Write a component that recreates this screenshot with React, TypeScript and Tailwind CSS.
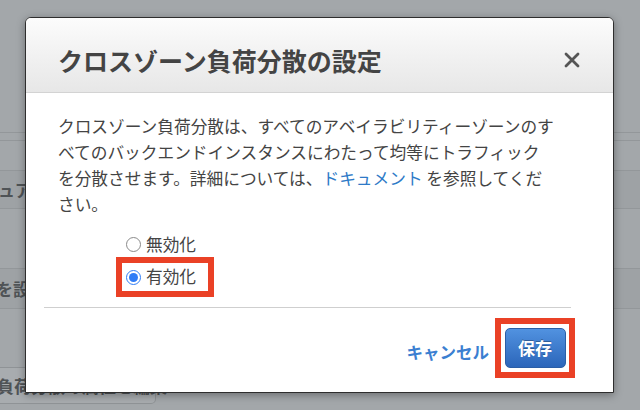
import React from "react";

function Radio({ checked }: { checked: boolean }) {
  if (checked) {
    return (
      <span className="flex h-[15px] w-[15px] items-center justify-center rounded-full border-[1.5px] border-[#2f7cf6] bg-white">
        <span className="h-[9px] w-[9px] rounded-full bg-[#2f7cf6]" />
      </span>
    );
  }
  return <span className="h-[15px] w-[15px] rounded-full border border-[#8a8a8a] bg-white" />;
}

function BackgroundPage() {
  return (
    <div className="flex flex-col text-[17px] font-bold text-[#4f5356]">
      <div className="h-[132px]" />
      <div className="h-[8px] border-t border-[#93979a]" />
      <div className="h-[30px] border-t border-[#93979a]" />
      <div className="flex h-[38px] items-center border-t border-[#93979a] bg-[#9ea2a5] pl-[0px]">
        <span className="-ml-[2px]">ュア</span>
      </div>
      <div className="h-[60px] border-t border-[#93979a]" />
      <div className="flex h-[40px] items-center border-t border-[#93979a] bg-[#9ea2a5]">
        <span className="-ml-[4px]">を設定</span>
      </div>
      <div className="h-[59px] border-t border-[#93979a]" />
      <div className="flex h-[37px] w-[156px] items-center rounded-br-[5px] border border-l-0 border-[#8f9396] bg-[#a8acaf]">
        <span className="-ml-[3px] whitespace-nowrap">負荷分散の属性を編集</span>
      </div>
    </div>
  );
}

function Modal() {
  return (
    <div className="absolute left-[25px] top-[17px] flex h-[376px] w-[589px] flex-col rounded-t-[6px] border-[1.5px] border-[#2e2e2e] bg-white shadow-[0_2px_8px_rgba(0,0,0,0.35)]">
      <div className="flex h-[75px] items-start justify-between rounded-t-[5px] border-b border-[#d3d3d3] bg-gradient-to-b from-[#fcfcfc] to-[#e7e7e7] pl-[32px] pr-[33px] pt-[26px]">
        <h2 className="text-[25px] font-bold leading-[32px] text-[#444]">
          クロスゾーン負荷分散の設定
        </h2>
        <svg className="mt-[8px] h-[16px] w-[16px]" viewBox="0 0 16 16" aria-hidden="true">
          <path d="M2 2L14 14M14 2L2 14" stroke="#555" strokeWidth="2.8" strokeLinecap="round" />
        </svg>
      </div>

      <div className="pl-[32px] pt-[20px]">
        <p className="text-[16.7px] leading-[26px] text-[#444]">
          クロスゾーン負荷分散は、すべてのアベイラビリティーゾーンのす
          <br />
          べてのバックエンドインスタンスにわたって均等にトラフィック
          <br />
          を分散させます。詳細については、
          <span className="text-[#2e7ac7]">ドキュメント</span> を参照してくだ
          <br />
          さい。
        </p>
      </div>

      <div className="mt-[15px] flex flex-col items-start pl-[90px] text-[16.7px] text-[#444]">
        <label className="flex h-[25px] items-center gap-[5px] pl-[10px]">
          <Radio checked={false} />
          <span>無効化</span>
        </label>
        <div className="flex h-[40px] w-[98px] items-center gap-[5px] border-[6px] border-[#ea4126] pl-[4px]">
          <Radio checked />
          <span>有効化</span>
        </div>
      </div>

      <div className="ml-[18px] mr-[42px] mt-[10px] border-t border-[#cfcfcf]" />

      <div className="flex items-center justify-end gap-[6px] pr-[38px] pt-[10px]">
        <button className="mt-[8px] text-[16.5px] font-bold text-[#3b7fd1]">キャンセル</button>
        <div className="flex h-[60px] w-[80px] items-center justify-center border-[6px] border-[#ea4126]">
          <button className="flex h-[40px] w-[61px] items-center justify-center rounded-[5px] border border-[#2b5ea6] bg-gradient-to-b from-[#5192e0] to-[#2c66ba] text-[17px] font-bold text-white [text-shadow:0_-1px_0_rgba(0,0,0,0.3)]">
            保存
          </button>
        </div>
      </div>
    </div>
  );
}

export default function App() {
  return (
    <div className="relative h-[410px] w-[640px] overflow-hidden bg-[#a3a7aa] font-['Noto_Sans_CJK_JP',sans-serif]">
      <BackgroundPage />
      <Modal />
    </div>
  );
}
